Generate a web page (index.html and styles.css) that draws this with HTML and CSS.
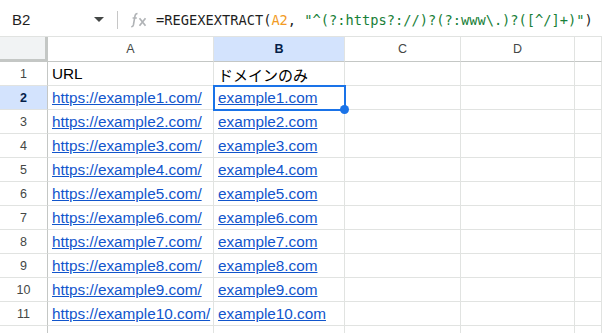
FILE: index.html
```html
<!doctype html>
<html lang="ja">
  <head>
    <meta charset="UTF-8" />
    <title>Sheet</title>
    <link rel="stylesheet" href="styles.css">
  </head>
  <body>
    <!-- Formula bar -->
    <div class="formula-bar">
      <div class="name-box">
        <span>B2</span>
        <span class="caret"></span>
      </div>
      <div class="divider"></div>
      <div class="fx">
        <svg width="18" height="16" viewBox="0 0 18 16">
          <path d="M7.5 1.5c-1.6 0-2.2.8-2.5 2.3L3.4 13c-.3 1.4-.9 1.8-2.2 1.8" fill="none" stroke="#b0b3b6" stroke-width="1.6"/>
          <path d="M2.6 6h4.2" stroke="#b0b3b6" stroke-width="1.5"/>
          <path d="M9.5 6.2l6 7.6M15.5 6.2l-6 7.6" stroke="#b0b3b6" stroke-width="1.7"/>
        </svg>
      </div>
      <div class="formula">=REGEXEXTRACT(<span class="ref">A2</span>, <span class="str">"^(?:https?://)?(?:www\.)?([^/]+)"</span>)</div>
    </div>

    <!-- Grid -->
    <div class="sheet">
      <div class="corner"></div>
      <div class="col-head">A</div>
      <div class="col-head active">B</div>
      <div class="col-head">C</div>
      <div class="col-head">D</div>
      <div class="col-head"></div>

      <div class="row-head">1</div>
      <div class="cell">URL</div>
      <div class="cell jp">ドメインのみ</div>
      <div class="cell"></div><div class="cell"></div><div class="cell"></div>

      <div class="row-head active">2</div>
      <div class="cell"><a href="#">https://example1.com/</a></div>
      <div class="cell selected"><a href="#">example1.com</a><span class="handle"></span></div>
      <div class="cell"></div><div class="cell"></div><div class="cell"></div>

      <div class="row-head">3</div>
      <div class="cell"><a href="#">https://example2.com/</a></div>
      <div class="cell"><a href="#">example2.com</a></div>
      <div class="cell"></div><div class="cell"></div><div class="cell"></div>

      <div class="row-head">4</div>
      <div class="cell"><a href="#">https://example3.com/</a></div>
      <div class="cell"><a href="#">example3.com</a></div>
      <div class="cell"></div><div class="cell"></div><div class="cell"></div>

      <div class="row-head">5</div>
      <div class="cell"><a href="#">https://example4.com/</a></div>
      <div class="cell"><a href="#">example4.com</a></div>
      <div class="cell"></div><div class="cell"></div><div class="cell"></div>

      <div class="row-head">6</div>
      <div class="cell"><a href="#">https://example5.com/</a></div>
      <div class="cell"><a href="#">example5.com</a></div>
      <div class="cell"></div><div class="cell"></div><div class="cell"></div>

      <div class="row-head">7</div>
      <div class="cell"><a href="#">https://example6.com/</a></div>
      <div class="cell"><a href="#">example6.com</a></div>
      <div class="cell"></div><div class="cell"></div><div class="cell"></div>

      <div class="row-head">8</div>
      <div class="cell"><a href="#">https://example7.com/</a></div>
      <div class="cell"><a href="#">example7.com</a></div>
      <div class="cell"></div><div class="cell"></div><div class="cell"></div>

      <div class="row-head">9</div>
      <div class="cell"><a href="#">https://example8.com/</a></div>
      <div class="cell"><a href="#">example8.com</a></div>
      <div class="cell"></div><div class="cell"></div><div class="cell"></div>

      <div class="row-head">10</div>
      <div class="cell"><a href="#">https://example9.com/</a></div>
      <div class="cell"><a href="#">example9.com</a></div>
      <div class="cell"></div><div class="cell"></div><div class="cell"></div>

      <div class="row-head">11</div>
      <div class="cell"><a href="#">https://example10.com/</a></div>
      <div class="cell"><a href="#">example10.com</a></div>
      <div class="cell"></div><div class="cell"></div><div class="cell"></div>

      <div class="row-head">12</div>
      <div class="cell"></div><div class="cell"></div>
      <div class="cell"></div><div class="cell"></div><div class="cell"></div>
    </div>
  </body>
</html>
```

FILE: styles.css
```css
* {
  margin: 0;
  padding: 0;
  box-sizing: border-box;
}

body {
  width: 602px;
  height: 333px;
  overflow: hidden;
  background: #fff;
  font-family: "Liberation Sans", Arial, sans-serif;
  color: #000;
}

/* Formula bar */
.formula-bar {
  display: flex;
  align-items: center;
  height: 37px;
  padding-top: 3px;
  border-bottom: 1px solid #e1e3e1;
}

.name-box {
  display: flex;
  align-items: center;
  justify-content: space-between;
  width: 104px;
  padding-left: 12px;
  font-size: 15px;
  color: #1f1f1f;
}

.caret {
  width: 0;
  height: 0;
  border-left: 5px solid transparent;
  border-right: 5px solid transparent;
  border-top: 5px solid #444746;
}

.divider {
  width: 1px;
  height: 18px;
  background: #c7c7c7;
  margin-left: 13px;
}

.fx {
  display: flex;
  align-items: center;
  margin-left: 12px;
  width: 26px;
}

.formula {
  font-family: "DejaVu Sans Mono", monospace;
  font-size: 13.7px;
  color: #1f1f1f;
  white-space: nowrap;
}

.formula .ref {
  color: #f29b25;
}

.formula .str {
  color: #188038;
}

/* Grid */
.sheet {
  display: grid;
  grid-template-columns: 48px 166px 131px 116px 114px 27px;
  grid-template-rows: 25px repeat(12, 24px);
}

.corner {
  background: #f1f3f4;
  border-right: 3px solid #c4c7c5;
  border-bottom: 3px solid #c4c7c5;
}

.col-head {
  display: flex;
  align-items: center;
  justify-content: center;
  font-size: 12.5px;
  color: #444746;
  border-right: 1px solid #e1e3e1;
  border-bottom: 1px solid #c4c7c5;
}

.col-head.active {
  background: #d3e3fd;
  font-weight: bold;
  color: #041e49;
}

.row-head {
  display: flex;
  align-items: center;
  justify-content: center;
  font-size: 12.5px;
  color: #444746;
  border-right: 1px solid #c4c7c5;
  border-bottom: 1px solid #e1e3e1;
}

.row-head.active {
  background: #d3e3fd;
  font-weight: bold;
  color: #041e49;
}

.cell {
  position: relative;
  display: flex;
  align-items: flex-end;
  padding: 0 4px 2px;
  font-size: 15.3px;
  white-space: nowrap;
  border-right: 1px solid #e1e3e1;
  border-bottom: 1px solid #e1e3e1;
}

.cell.jp {
  font-family: "Noto Sans CJK JP", sans-serif;
  font-size: 15px;
  padding-bottom: 0;
}

.cell a {
  color: #1155cc;
  text-decoration: underline;
}

.cell.selected {
  outline: 2px solid #1a73e8;
  outline-offset: -1px;
  z-index: 1;
}

.handle {
  position: absolute;
  right: -5px;
  bottom: -5px;
  width: 9px;
  height: 9px;
  border-radius: 50%;
  background: #1a73e8;
}
```
